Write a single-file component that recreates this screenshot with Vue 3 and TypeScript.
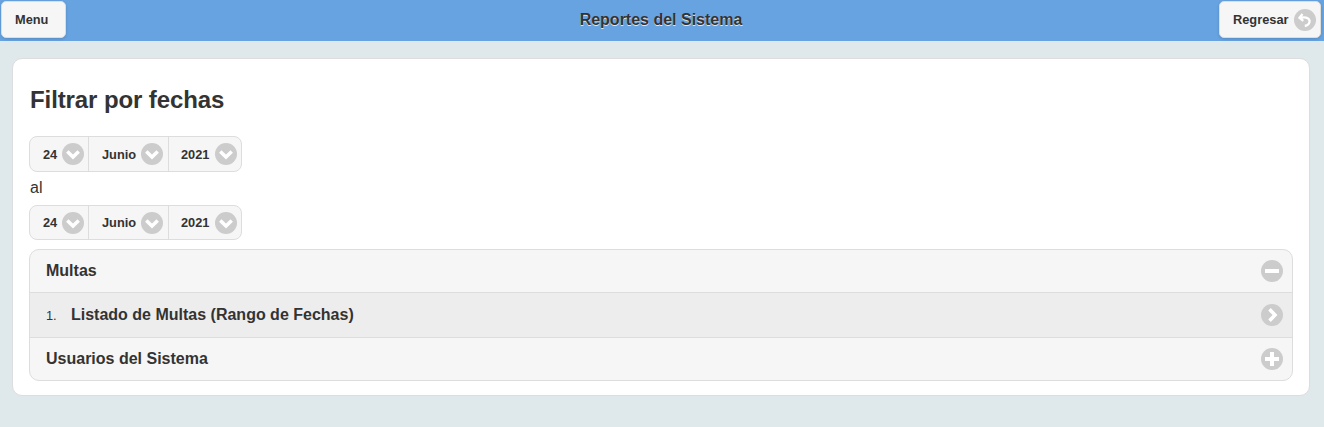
<script setup lang="ts">
interface DateGroup {
  id: string;
  parts: string[];
}

const dateGroups: DateGroup[] = [
  { id: 'desde', parts: ['24', 'Junio', '2021'] },
  { id: 'hasta', parts: ['24', 'Junio', '2021'] },
];
</script>

<template>
  <div class="page">
    <header class="topbar">
      <div class="topbar__side">
        <button class="btn btn--menu" type="button">Menu</button>
      </div>
      <h1 class="topbar__title">Reportes del Sistema</h1>
      <div class="topbar__side topbar__side--right">
        <button class="btn btn--back" type="button">
          <span>Regresar</span>
          <span class="icon">
            <svg viewBox="0 0 22 22" width="22" height="22">
              <path
                d="M8.500 5 5.500 8.800l3.800 3M6 8.800c2.300-.6 4.400-.7 6.100-.2 2.700.8 3.900 2.800 3.300 4.900-.5 1.900-2.200 3.100-4.600 3.500"
                fill="none"
                stroke="#fff"
                stroke-width="2.300"
              />
            </svg>
          </span>
        </button>
      </div>
    </header>

    <main class="card">
      <h2 class="card__title">Filtrar por fechas</h2>

      <template v-for="(group, i) in dateGroups" :key="group.id">
        <div class="al" v-if="i > 0">al</div>
        <div class="dategroup" :class="{ 'dategroup--second': i > 0 }">
          <div v-for="(part, j) in group.parts" :key="j" class="dategroup__cell">
            <span>{{ part }}</span>
            <span class="icon">
              <svg viewBox="0 0 22 22" width="22" height="22">
                <path d="M5.300 8.500 11 14l5.700-5.500" fill="none" stroke="#fff" stroke-width="3.500" />
              </svg>
            </span>
          </div>
        </div>
      </template>

      <section class="accordion">
        <div class="row row--head">
          <span class="row__label">Multas</span>
          <span class="icon">
            <svg viewBox="0 0 22 22" width="22" height="22">
              <rect x="4" y="9" width="14" height="4" fill="#fff" />
            </svg>
          </span>
        </div>
        <div class="row row--item">
          <span class="row__num">1.</span>
          <span class="row__label">Listado de Multas (Rango de Fechas)</span>
          <span class="icon">
            <svg viewBox="0 0 22 22" width="22" height="22">
              <path d="M8.500 5.300 14 11l-5.500 5.700" fill="none" stroke="#fff" stroke-width="3.500" />
            </svg>
          </span>
        </div>
        <div class="row row--head">
          <span class="row__label">Usuarios del Sistema</span>
          <span class="icon">
            <svg viewBox="0 0 22 22" width="22" height="22">
              <path d="M9 4h4v5h5v4h-5v5H9v-5H4V9h5z" fill="#fff" />
            </svg>
          </span>
        </div>
      </section>
    </main>
  </div>
</template>

<style>
html,
body {
  margin: 0;
  background: #dfe8ea;
}
</style>

<style scoped>
.page {
  min-height: 427px;
  background: #dfe8ea;
  color: #333;
  font-family: "Liberation Sans", Arial, sans-serif;
  font-size: 16px;
}

.topbar {
  height: 41px;
  box-sizing: border-box;
  padding: 1px 3px 0 1px;
  display: grid;
  grid-template-columns: 1fr auto 1fr;
  align-items: start;
  background: #66a3e0;
}

.topbar__side {
  display: flex;
}

.topbar__side--right {
  justify-content: flex-end;
}

.topbar__title {
  margin: 0;
  padding-top: 10px;
  font-size: 16px;
  line-height: 18px;
  font-weight: 700;
  text-shadow: 0 1px 0 #e6e6e6;
}

.btn {
  height: 37px;
  box-sizing: border-box;
  display: flex;
  align-items: center;
  border: 1px solid #ddd;
  border-radius: 5px;
  background: #f6f6f6;
  color: #333;
  font-family: inherit;
  font-size: 12.800px;
  font-weight: 700;
  box-shadow: 0 1px 3px rgba(0, 0, 0, 0.15);
}

.btn--menu {
  width: 65px;
  padding: 0 0 0 13px;
}

.btn--back {
  width: 102px;
  padding: 0 0 0 13px;
  gap: 5px;
}

.icon {
  width: 22px;
  height: 22px;
  flex: none;
  border-radius: 50%;
  background: #ccc;
  display: block;
}

.icon svg {
  display: block;
}

.card {
  margin: 17px 14px 0 12px;
  height: 338px;
  box-sizing: border-box;
  padding: 0 16px;
  background: #fff;
  border: 1px solid #ddd;
  border-radius: 10px;
}

.card__title {
  margin: 0;
  padding: 26px 0 0 1px;
  height: 77px;
  box-sizing: border-box;
  font-size: 24px;
  letter-spacing: -0.1px;
  line-height: 30px;
  font-weight: 700;
}

.dategroup {
  width: 213px;
  height: 36px;
  box-sizing: border-box;
  display: flex;
  background: #f6f6f6;
  border: 1px solid #ddd;
  border-radius: 8px;
}

.dategroup--second {
  height: 35px;
}

.dategroup__cell {
  display: flex;
  align-items: center;
  box-sizing: border-box;
  padding-left: 13px;
  width: 80px;
  gap: 5px;
  font-size: 12.800px;
  font-weight: 700;
  border-left: 1px solid #ddd;
}

.dategroup__cell:first-child {
  width: 58px;
  border-left: 0;
}

.dategroup__cell:last-child {
  width: 73px;
  padding-left: 12px;
  gap: 6px;
}

.al {
  height: 33px;
  padding-left: 1px;
  line-height: 32px;
  font-size: 16px;
}

.accordion {
  margin-top: 9px;
  background: #f6f6f6;
  border: 1px solid #ddd;
  border-radius: 10px;
  overflow: hidden;
}

.row {
  height: 42px;
  box-sizing: border-box;
  display: flex;
  align-items: center;
  padding: 0 9px 0 16px;
  font-size: 16px;
  font-weight: 700;
}

.row--item {
  height: 46px;
  background: #ededed;
  border-top: 1px solid #ddd;
  border-bottom: 1px solid #ddd;
}

.row__num {
  width: 25px;
  font-size: 12.800px;
  font-weight: 400;
}

.row__label {
  flex: 1;
}
</style>
